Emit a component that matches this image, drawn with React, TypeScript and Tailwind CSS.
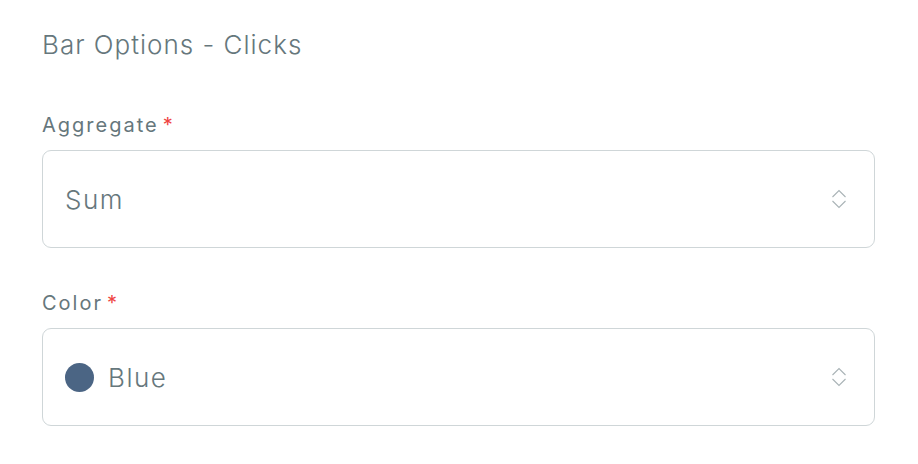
const font = { fontFamily: "Inter, 'Liberation Sans', sans-serif" };

function Chevrons() {
  return (
    <svg width="16" height="24" viewBox="0 0 16 24" fill="none" stroke="#a9b3b6" strokeWidth="1.1">
      <path d="M1.5 10 L8 3.5 L14.5 10" />
      <path d="M1.5 14 L8 20.5 L14.5 14" />
    </svg>
  );
}

function Field({ label, children }: { label: string; children: React.ReactNode }) {
  return (
    <div className="flex flex-col">
      <label className="text-[20px] leading-[24px] text-[#66777c] mb-[13px]">
        <span className="tracking-[2px]">{label}</span>
        <span className="ml-[4px] text-[#ef4444]">*</span>
      </label>
      <div className="h-[98px] rounded-[9px] border border-[#cfd6d8] bg-white flex items-center pl-[22px] pr-[27px]">
        <div className="flex-1 flex items-center gap-[14px] text-[26px] tracking-[1.5px] font-light text-[#66777c]">{children}</div>
        <Chevrons />
      </div>
    </div>
  );
}

export default function App() {
  return (
    <div className="w-[918px] h-[464px] bg-white px-[42px] pt-[28px]" style={font}>
      <h1 className="text-[26px] leading-[34px] tracking-[1px] font-light text-[#66777c] mb-[51px]">Bar Options - Clicks</h1>
      <div className="flex flex-col gap-[43px] w-[833px]">
        <Field label="Aggregate">Sum</Field>
        <Field label="Color">
          <span className="w-[29px] h-[29px] rounded-full bg-[#4b6584]" />
          Blue
        </Field>
      </div>
    </div>
  );
}
